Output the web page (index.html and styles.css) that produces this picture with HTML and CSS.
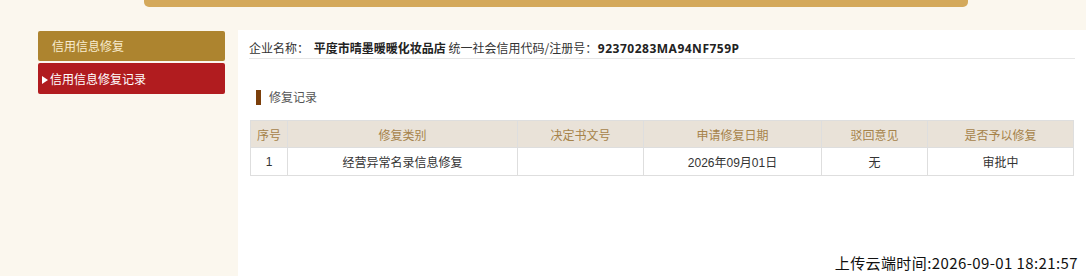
FILE: index.html
```html
<!DOCTYPE html>
<html lang="zh-CN">
<head>
<meta charset="utf-8">
<title>信用信息修复记录</title>
<link rel="stylesheet" href="styles.css">
</head>
<body>
<div class="topbar"></div>
<div class="main">
  <div class="sidebar">
    <div class="nav-item nav-gold">信用信息修复</div>
    <div class="nav-item nav-red"><span class="arrow"></span>信用信息修复记录</div>
  </div>
  <div class="content">
    <div class="info">
      <span class="label">企业名称：</span>
      <span class="name">平度市晴墨暖暖化妆品店</span>
      <span class="label">统一社会信用代码/注册号：</span>
      <span class="code">92370283MA94NF759P</span>
    </div>
    <div class="section-title"><span class="bar"></span>修复记录</div>
    <table class="records">
      <thead>
        <tr>
          <th class="c1">序号</th>
          <th class="c2">修复类别</th>
          <th class="c3">决定书文号</th>
          <th class="c4">申请修复日期</th>
          <th class="c5">驳回意见</th>
          <th class="c6">是否予以修复</th>
        </tr>
      </thead>
      <tbody>
        <tr>
          <td>1</td>
          <td>经营异常名录信息修复</td>
          <td></td>
          <td>2026年09月01日</td>
          <td>无</td>
          <td>审批中</td>
        </tr>
      </tbody>
    </table>
    <div class="upload-time">上传云端时间:2026-09-01 18:21:57</div>
  </div>
</div>
</body>
</html>
```
FILE: styles.css
```css
html, body {
  margin: 0;
  padding: 0;
}
body {
  background: #fbf7ee;
  font-family: "Liberation Sans", "Noto Sans CJK SC", sans-serif;
  font-size: 12px;
  color: #333;
  height: 276px;
  overflow: hidden;
}
.topbar {
  margin-left: 144px;
  width: 824px;
  height: 7px;
  background: #d4a95b;
  border-radius: 0 0 5px 5px;
}
.main {
  display: flex;
  padding-top: 23px;
  padding-left: 38px;
  height: 246px;
}
.sidebar {
  flex: 0 0 187px;
  width: 187px;
  margin-top: 1px;
}
.nav-item {
  height: 30px;
  line-height: 30px;
  border-radius: 2px;
  font-family: "Noto Sans CJK SC", sans-serif;
  font-size: 12px;
}
.nav-gold {
  background: #ad842f;
  color: #f8ecd0;
  padding-left: 14px;
  margin-bottom: 2px;
}
.nav-red {
  background: #b11c1f;
  color: #fff;
  padding-left: 4px;
  height: 31px;
  line-height: 31px;
}
.arrow {
  display: inline-block;
  width: 0;
  height: 0;
  border-top: 4px solid transparent;
  border-bottom: 4px solid transparent;
  border-left: 6px solid #fff;
  margin-right: 2px;
  vertical-align: 0px;
}
.content {
  flex: 1 1 auto;
  min-width: 0;
  margin-left: 13px;
  background: #fff;
  padding: 0 11px;
  display: flex;
  flex-direction: column;
}
.info {
  padding-top: 8px;
  height: 20px;
  line-height: 20px;
  border-bottom: 1px solid #e6e6e6;
  font-family: "Noto Sans CJK SC", sans-serif;
  color: #333;
}
.info .name {
  font-weight: bold;
  margin-left: 2px;
  color: #222;
}
.info .code {
  font-family: "Noto Sans", "Noto Sans CJK SC", sans-serif;
  font-weight: bold;
  font-size: 12px;
  letter-spacing: 0.5px;
  margin-left: -2px;
  color: #222;
}
.section-title {
  margin-top: 30px;
  margin-left: 7px;
  height: 16px;
  line-height: 16px;
  display: flex;
  align-items: center;
  font-family: "Noto Sans CJK SC", sans-serif;
  color: #555;
}
.section-title .bar {
  width: 5px;
  height: 15px;
  background: #7b3f0b;
  margin-right: 8px;
}
.records {
  margin: 15px 1px 0 1px;
  border-collapse: collapse;
  width: 824px;
  table-layout: fixed;
  font-family: "Liberation Sans", "Noto Sans CJK SC", sans-serif;
  font-size: 12px;
}
.records th, .records td {
  border: 1px solid #dedede;
  text-align: center;
  padding: 0;
}
.records th {
  background: #e9e2d8;
  color: #a6834a;
  font-weight: normal;
  height: 26px;
}
.records td {
  height: 27px;
  color: #333;
}
.c1 { width: 36px; }
.c2 { width: 229px; }
.c3 { width: 125px; }
.c4 { width: 177px; }
.c5 { width: 105px; }
.upload-time {
  margin-top: auto;
  margin-right: -3px;
  margin-bottom: 3px;
  text-align: right;
  font-family: "Noto Sans CJK SC", sans-serif;
  font-size: 15px;
  letter-spacing: 0.4px;
  color: #111;
  line-height: 20px;
}
```
